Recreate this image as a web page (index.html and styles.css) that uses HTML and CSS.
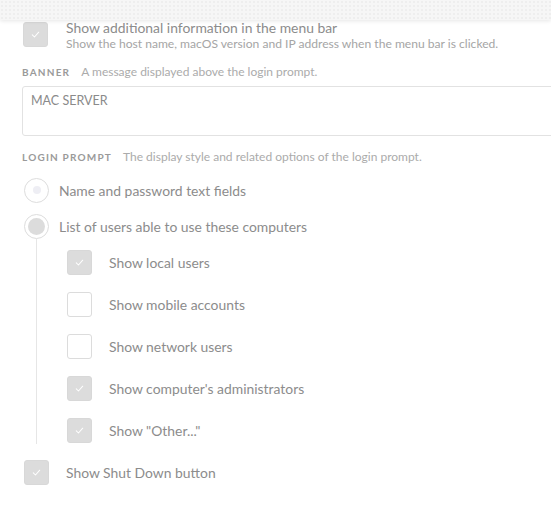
FILE: index.html
```html
<!DOCTYPE html>
<html>
<head>
<meta charset="utf-8">
<link rel="stylesheet" href="styles.css">
</head>
<body>
<div class="topbar"></div>
<main class="content">
  <div class="opt opt-top">
    <span class="cb checked"><svg viewBox="0 0 25 25"><path d="M9 12.8 L11.4 15.2 L16 10" /></svg></span>
    <div class="opt-text">
      <div class="opt-title">Show additional information in the menu bar</div>
      <div class="opt-sub">Show the host name, macOS version and IP address when the menu bar is clicked.</div>
    </div>
  </div>

  <div class="section-head"><span class="section-label">BANNER</span><span class="section-desc">A message displayed above the login prompt.</span></div>
  <div class="textbox">MAC SERVER</div>

  <div class="section-head login-head"><span class="section-label">LOGIN PROMPT</span><span class="section-desc">The display style and related options of the login prompt.</span></div>

  <div class="radio-row">
    <span class="radio"><span class="dot dot-light"></span></span>
    <span class="label">Name and password text fields</span>
  </div>
  <div class="radio-row">
    <span class="radio"><span class="dot dot-on"></span></span>
    <span class="label">List of users able to use these computers</span>
  </div>

  <div class="nested">
    <div class="opt-row"><span class="cb checked"><svg viewBox="0 0 25 25"><path d="M9 12.8 L11.4 15.2 L16 10" /></svg></span><span class="label">Show local users</span></div>
    <div class="opt-row"><span class="cb"></span><span class="label">Show mobile accounts</span></div>
    <div class="opt-row"><span class="cb"></span><span class="label">Show network users</span></div>
    <div class="opt-row"><span class="cb checked"><svg viewBox="0 0 25 25"><path d="M9 12.8 L11.4 15.2 L16 10" /></svg></span><span class="label">Show computer's administrators</span></div>
    <div class="opt-row"><span class="cb checked"><svg viewBox="0 0 25 25"><path d="M9 12.8 L11.4 15.2 L16 10" /></svg></span><span class="label">Show "Other..."</span></div>
  </div>

  <div class="opt-row shut"><span class="cb checked"><svg viewBox="0 0 25 25"><path d="M9 12.8 L11.4 15.2 L16 10" /></svg></span><span class="label">Show Shut Down button</span></div>
</main>
</body>
</html>
```
FILE: styles.css
```css
html, body {
  margin: 0;
  padding: 0;
  background: #fff;
  overflow: hidden;
}
body {
  font-family: Lato, "Open Sans", sans-serif;
  color: #8a8a8a;
  width: 551px;
  height: 516px;
  position: relative;
}
.topbar {
  position: absolute;
  top: 0;
  left: 0;
  right: 0;
  height: 20px;
  background-color: #f6f6f6;
  background-image: radial-gradient(circle at 2px 2px, #eeeeee 1px, transparent 1.5px);
  background-size: 4px 4px;
  box-shadow: 0 1px 4px rgba(0,0,0,0.10);
  z-index: 2;
}
.content {
  padding: 22px 0 0 22px;
}
.cb {
  flex: none;
  width: 25px;
  height: 25px;
  box-sizing: border-box;
  border: 1px solid #dcdcdc;
  border-radius: 3px;
  background: #fff;
  display: block;
}
.cb.checked {
  background: #dcdcdc;
  border-color: #d8d8d8;
}
.cb svg {
  display: block;
  width: 23px;
  height: 23px;
  fill: none;
  stroke: #fff;
  stroke-width: 1.1;
  stroke-linecap: round;
  stroke-linejoin: round;
}
.opt-top {
  display: flex;
  align-items: flex-start;
  gap: 18px;
  padding-left: 1px;
}
.opt-text {
  margin-top: -2px;
}
.opt-title {
  font-size: 13.9px;
  line-height: 16px;
  color: #8c8c8c;
}
.opt-sub {
  font-size: 12.1px;
  line-height: 15px;
  color: #a5a5a5;
}
.section-head {
  margin-top: 14px;
  display: flex;
  align-items: baseline;
  gap: 11px;
  line-height: 14px;
}
.section-label {
  font-size: 10px;
  font-weight: 700;
  letter-spacing: 1.2px;
  color: #9a9a9a;
}
.section-desc {
  font-size: 12px;
  color: #ababab;
}
.textbox {
  margin-top: 7px;
  width: 560px;
  height: 50px;
  box-sizing: border-box;
  border: 1px solid #e2e2e2;
  border-radius: 3px;
  padding: 6px 8px;
  font-size: 12.5px;
  line-height: 16px;
  color: #8a8a8a;
}
.login-head {
  margin-top: 14px;
}
.radio-row {
  display: flex;
  align-items: center;
  gap: 10px;
  height: 26px;
  margin-top: 13px;
  padding-left: 2px;
}
.radio-row + .radio-row {
  margin-top: 10px;
}
.radio {
  width: 25px;
  height: 25px;
  box-sizing: border-box;
  border: 1px solid #dddddd;
  border-radius: 50%;
  display: flex;
  align-items: center;
  justify-content: center;
  background: #fff;
}
.dot {
  border-radius: 50%;
}
.dot-light {
  width: 8px;
  height: 8px;
  background: #eeeef4;
}
.dot-on {
  width: 17px;
  height: 17px;
  background: #dcdcdc;
}
.label {
  font-size: 13.9px;
  color: #8c8c8c;
}
.nested {
  margin-left: 14px;
  border-left: 1px solid #e6e6e6;
  padding: 11px 0 1px 30px;
  display: flex;
  flex-direction: column;
  gap: 17px;
}
.opt-row {
  display: flex;
  align-items: center;
  gap: 17px;
  height: 25px;
}
.shut {
  margin-top: 16px;
  padding-left: 2px;
}
```
